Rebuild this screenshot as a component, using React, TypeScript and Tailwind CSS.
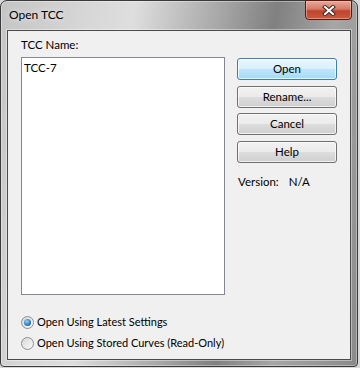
import React from "react";

const font = { fontFamily: 'Lato, "Noto Sans", Arial, sans-serif' };

function WinButton({ label, primary }: { label: string; primary?: boolean }) {
  return (
    <div
      className={
        "h-[22px] w-[100px] rounded-[3px] border flex items-center justify-center text-[11.5px] leading-none text-black shadow-[inset_0_0_0_1px_rgba(255,255,255,0.7)] " +
        (primary
          ? "border-[#3c7fb1] bg-[linear-gradient(to_bottom,#eaf6fd_0%,#d9f0fc_50%,#bee6fd_50%,#a7d9f5_100%)]"
          : "border-[#707070] bg-[linear-gradient(to_bottom,#f2f2f2_0%,#ebebeb_50%,#dddddd_50%,#cfcfcf_100%)]")
      }
    >
      {label}
    </div>
  );
}

function Radio({ checked, label }: { checked?: boolean; label: string }) {
  return (
    <div className="flex items-center h-[16px]">
      <div className="ml-[13px] w-[13px] h-[13px] rounded-full border border-[#8e8f8f] bg-[linear-gradient(135deg,#d8d8d8,#f8f8f8)] flex items-center justify-center">
        {checked && (
          <div className="w-[7px] h-[7px] rounded-full bg-[radial-gradient(circle_at_40%_35%,#9fd3f7_0%,#2f7fc4_55%,#0f4d8a_100%)]" />
        )}
      </div>
      <span className="ml-[3px] text-[11px] leading-[16px] text-black">{label}</span>
    </div>
  );
}

export default function App() {
  return (
    <div className="w-[360px] h-[368px] bg-[#d9d9d9] relative overflow-hidden" style={font}>
      <div className="w-[358px] h-[367px] rounded-t-[7px] rounded-b-[4px] border border-[#3a3a3a] bg-[linear-gradient(100deg,#c4c4c4_0%,#d6d6d6_20%,#dedede_32%,#a9a9a9_52%,#808080_66%,#a6a6a6_80%,#8a8a8a_100%)] flex flex-col shadow-[inset_0_0_0_1px_rgba(255,255,255,0.35)]">
        <div className="h-[29px] flex items-start justify-between">
          <div className="pl-[8px] pt-[6px] text-[12px] leading-[16px] text-black [text-shadow:0_0_6px_rgba(255,255,255,0.9)]">
            Open TCC
          </div>
          <div className="mr-[5px] mt-[-1px] w-[47px] h-[20px] rounded-b-[4px] border border-[#5a1a10] bg-[linear-gradient(to_bottom,#e8a89a_0%,#d57a66_45%,#c0442c_55%,#c85a3e_100%)] flex items-center justify-center shadow-[inset_0_0_0_1px_rgba(255,200,190,0.5)]">
            <svg width="14" height="11" viewBox="0 0 14 11">
              <path d="M3 2 L11 9 M11 2 L3 9" stroke="#3a2a2a" strokeWidth="4" strokeLinecap="square" />
              <path d="M3 2 L11 9 M11 2 L3 9" stroke="#ffffff" strokeWidth="2" strokeLinecap="square" />
            </svg>
          </div>
        </div>
        <div className="mx-[6px] mb-[6px] flex-1 border border-[#4a4a4a] bg-[#f0f0f0] flex flex-col shadow-[0_0_0_1px_rgba(255,255,255,0.4)]">
          <div className="flex pl-[13px] pt-[6px]">
            <div className="flex flex-col">
              <div className="text-[11.5px] leading-[16px] text-black">TCC Name:</div>
              <div className="mt-[4px] w-[204px] h-[238px] border border-[#828790] bg-white">
                <div className="pl-[2px] pt-[2px] text-[11.5px] leading-[16px] text-black">TCC-7</div>
              </div>
            </div>
            <div className="ml-[12px] mt-[21px] flex flex-col gap-[5.5px]">
              <WinButton label="Open" primary />
              <WinButton label="Rename..." />
              <WinButton label="Cancel" />
              <WinButton label="Help" />
              <div className="mt-[6px] text-[11.5px] leading-[16px] text-black flex">
                <span className="ml-[1px]">Version:</span>
                <span className="ml-[10px]">N/A</span>
              </div>
            </div>
          </div>
          <div className="mt-[19px] flex flex-col gap-[5px]">
            <Radio checked label="Open Using Latest Settings" />
            <Radio label="Open Using Stored Curves (Read-Only)" />
          </div>
        </div>
      </div>
    </div>
  );
}
